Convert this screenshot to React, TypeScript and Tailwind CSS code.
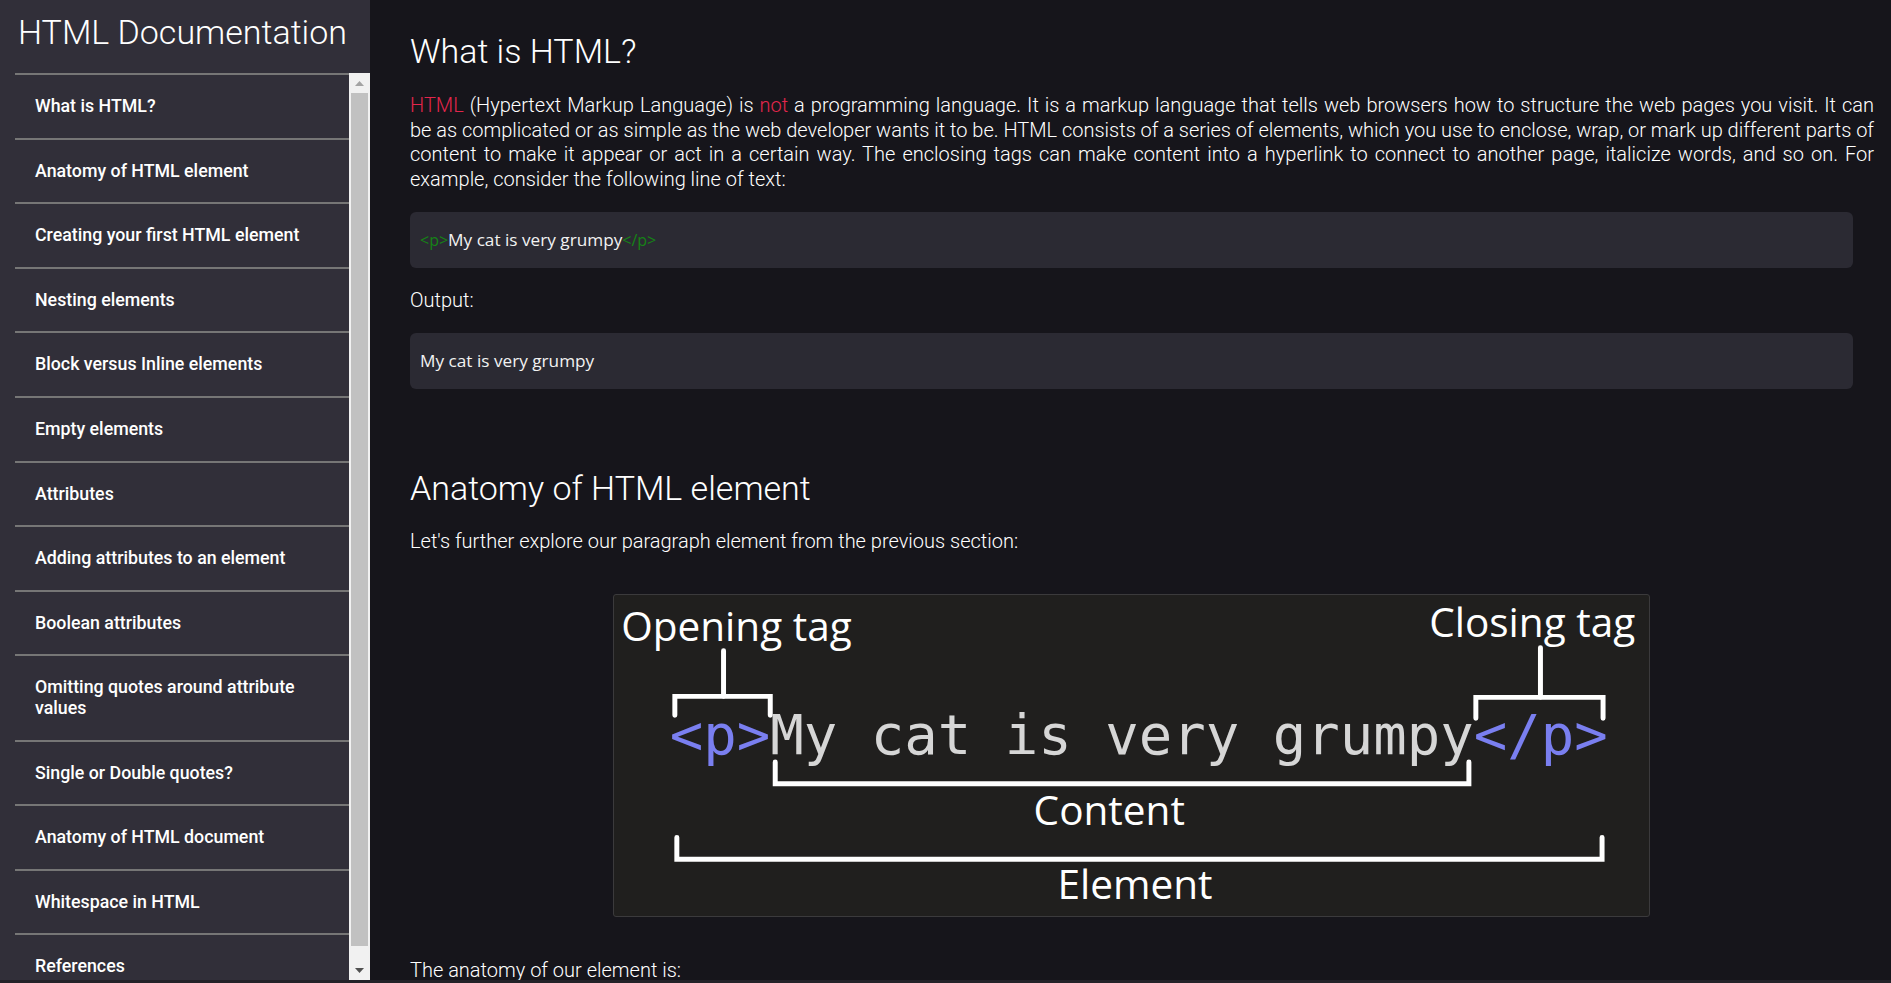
import React from "react";

const items = [
  "What is HTML?",
  "Anatomy of HTML element",
  "Creating your first HTML element",
  "Nesting elements",
  "Block versus Inline elements",
  "Empty elements",
  "Attributes",
  "Adding attributes to an element",
  "Boolean attributes",
  "Omitting quotes around attribute values",
  "Single or Double quotes?",
  "Anatomy of HTML document",
  "Whitespace in HTML",
  "References",
];

function Diagram() {
  const label = { fontFamily: "'Open Sans', 'Noto Sans', sans-serif", fontSize: 40.8, fill: "#ffffff" } as const;
  const mono = { fontFamily: "'DejaVu Sans Mono', 'Liberation Mono', monospace", fontSize: 56 } as const;
  return (
    <svg width="1037" height="323" viewBox="0 0 1037 323" className="block rounded-[3px] border border-[#3b3a3c] bg-[#201f1e]">
      <text x="5" y="46" style={label}>Opening tag</text>
      <text x="818" y="42" style={label}>Closing tag</text>
      <g stroke="#ffffff" strokeWidth="5" fill="none" strokeLinecap="round">
        <path d="M108 56 V102" />
        <path d="M59 121 V102 H155 V121" />
        <path d="M930 53 V103" />
        <path d="M865 124 V103 H993 V124" />
        <path d="M160 168 V190 H858 V168" />
        <path d="M61 244 V266 H992 V244" />
      </g>
      <text x="54" y="160" style={mono}>
        <tspan fill="#7a7ff0">&lt;p&gt;</tspan>
        <tspan fill="#d6d6d6">My cat is very grumpy</tspan>
        <tspan fill="#7a7ff0">&lt;/p&gt;</tspan>
      </text>
      <text x="420" y="231" style={label}>Content</text>
      <text x="444" y="306" style={label}>Element</text>
    </svg>
  );
}

export default function App() {
  const line = "block whitespace-nowrap text-justify [text-align-last:justify] [word-spacing:-3px]";
  return (
    <div className="flex h-[983px] flex-col overflow-hidden bg-[#16151b] font-[Roboto,sans-serif] text-white">
      <div className="flex h-[980px]">
        <aside className="flex w-[370px] shrink-0 flex-col bg-[#312f39]">
          <div className="h-[73px] shrink-0 pl-[18px] pt-[13px] text-[34px] font-light leading-[1.172]">
            HTML Documentation
          </div>
          <div className="flex min-h-0 flex-1 pl-[15px]">
            <ul className="min-w-0 flex-1 overflow-hidden">
              {items.map((t) => (
                <li
                  key={t}
                  className="border-t-2 border-[#767676] py-[21px] pl-[20px] text-[17.8px] font-medium leading-[20.6px]"
                >
                  {t}
                </li>
              ))}
            </ul>
            <div className="flex w-[21px] shrink-0 flex-col items-center bg-[#f1f1f1]">
              <div className="flex h-[20px] w-full items-center justify-center">
                <svg width="9" height="5" viewBox="0 0 9 5">
                  <path d="M0 5 L4.5 0 L9 5 Z" fill="#a3a3a3" />
                </svg>
              </div>
              <div className="h-[853px] w-[17px] bg-[#c1c1c1]" />
              <div className="h-[14px]" />
              <div className="flex h-[20px] w-full items-center justify-center">
                <svg width="9" height="5" viewBox="0 0 9 5">
                  <path d="M0 0 L9 0 L4.5 5 Z" fill="#505050" />
                </svg>
              </div>
            </div>
          </div>
        </aside>
        <main className="min-w-0 flex-1 overflow-hidden pl-[40px] pr-[17px] pt-[32px]">
          <h1 className="text-[34px] font-light leading-[1.172]">What is HTML?</h1>
          <p className="mt-[21.5px] text-[20px] font-light leading-[24.5px]">
            <span className={line}>
              <span className="text-[#e3264c]">HTML</span> (Hypertext Markup Language) is{" "}
              <span className="text-[#e3264c]">not</span> a programming language. It is a markup language that tells web
              browsers how to structure the web pages you visit. It can
            </span>
            <span className={line}>
              be as complicated or as simple as the web developer wants it to be. HTML consists of a series of elements,
              which you use to enclose, wrap, or mark up different parts of
            </span>
            <span className={line}>
              content to make it appear or act in a certain way. The enclosing tags can make content into a hyperlink to
              connect to another page, italicize words, and so on. For
            </span>
            <span className="block">example, consider the following line of text:</span>
          </p>
          <div className="mr-[21px] mt-[20.4px] flex h-[56px] items-center rounded-[6px] bg-[#2b2a33] px-[10px] font-['Open_Sans',sans-serif] text-[17.2px] text-[#f2f2f2]">
            <span className="text-[16px] text-[#168316]">&lt;p&gt;</span>My cat is very grumpy
            <span className="text-[16px] text-[#168316]">&lt;/p&gt;</span>
          </div>
          <p className="mt-[20.7px] text-[20px] font-light leading-[24.5px]">Output:</p>
          <div className="mr-[21px] mt-[20px] flex h-[56px] items-center rounded-[6px] bg-[#2b2a33] px-[10px] font-['Open_Sans',sans-serif] text-[17.2px] text-[#f2f2f2]">
            My cat is very grumpy
          </div>
          <h2 className="mt-[80px] text-[34px] font-light leading-[1.172]">Anatomy of HTML element</h2>
          <p className="mt-[20.5px] text-[20px] font-light leading-[24.5px]">
            Let's further explore our paragraph element from the previous section:
          </p>
          <div className="mr-[21px] mt-[40px] flex justify-center">
            <Diagram />
          </div>
          <p className="mt-[41px] text-[20px] font-light leading-[24.5px]">The anatomy of our element is:</p>
        </main>
      </div>
      <div className="h-[3px] bg-[#232228]" />
    </div>
  );
}
